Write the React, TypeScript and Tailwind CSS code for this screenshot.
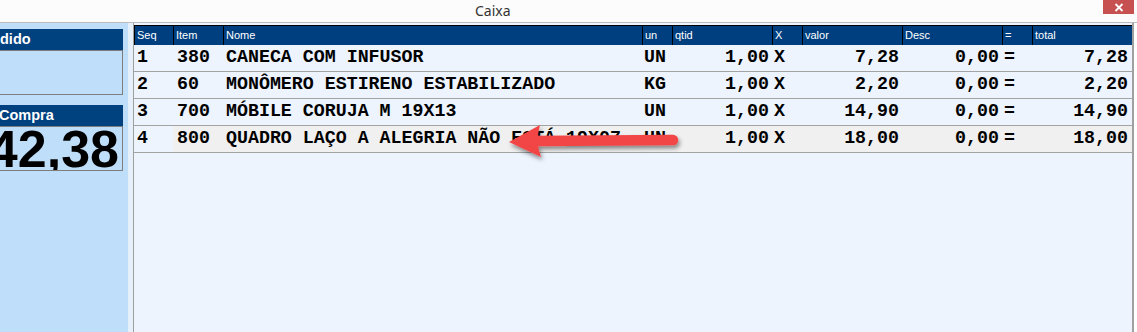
import React from "react";

type Col = { key: string; label: string; w: string; align: "left" | "right" };

const cols: Col[] = [
  { key: "seq", label: "Seq", w: "w-[39px]", align: "left" },
  { key: "item", label: "Item", w: "w-[50px]", align: "left" },
  { key: "nome", label: "Nome", w: "w-[419px]", align: "left" },
  { key: "un", label: "un", w: "w-[30px]", align: "left" },
  { key: "qtid", label: "qtid", w: "w-[100px]", align: "right" },
  { key: "x", label: "X", w: "w-[30px]", align: "left" },
  { key: "valor", label: "valor", w: "w-[100px]", align: "right" },
  { key: "desc", label: "Desc", w: "w-[100px]", align: "right" },
  { key: "eq", label: "=", w: "w-[30px]", align: "left" },
  { key: "total", label: "total", w: "w-[100px]", align: "right" },
];

const rows: Record<string, string>[] = [
  { seq: "1", item: "380", nome: "CANECA COM INFUSOR", un: "UN", qtid: "1,00", x: "X", valor: "7,28", desc: "0,00", eq: "=", total: "7,28" },
  { seq: "2", item: "60", nome: "MONÔMERO ESTIRENO ESTABILIZADO", un: "KG", qtid: "1,00", x: "X", valor: "2,20", desc: "0,00", eq: "=", total: "2,20" },
  { seq: "3", item: "700", nome: "MÓBILE CORUJA M 19X13", un: "UN", qtid: "1,00", x: "X", valor: "14,90", desc: "0,00", eq: "=", total: "14,90" },
  { seq: "4", item: "800", nome: "QUADRO LAÇO A ALEGRIA NÃO ESTÁ 19X07", un: "UN", qtid: "1,00", x: "X", valor: "18,00", desc: "0,00", eq: "=", total: "18,00" },
];

export default function App() {
  return (
    <div className="relative w-[1137px] h-[332px] overflow-hidden bg-white font-['Liberation_Sans',Arial,sans-serif]">
      {/* Title bar */}
      <div className="flex h-[23px] items-start border-b border-[#bcbcbc] bg-[#fcfcfc]">
        <div className="ml-[475px] mt-[1px] text-[14px] leading-[20px] text-[#333333] font-['Noto_Sans',sans-serif]">
          Caixa
        </div>
        <div className="ml-auto mr-[3px] flex h-[14px] w-[31px] items-center justify-center bg-[#c75050]">
          <svg width="10" height="9" viewBox="0 0 10 9">
            <path d="M1.5 1 L8.5 8 M8.5 1 L1.5 8" stroke="white" strokeWidth="1.8" />
          </svg>
        </div>
      </div>

      {/* Body */}
      <div className="flex h-[309px]">
        {/* Left panel */}
        <div className="w-[128px] overflow-hidden bg-[#bfdefa] pt-[6px]">
          <div className="ml-[-2px] w-[125px]">
            <div className="flex h-[21px] items-center bg-[#00417f] pl-[2px] text-[14.5px] font-bold text-white">
              dido
            </div>
            <div className="h-[45px] border border-[#7d7d7d] bg-[#bfdefa]" />
          </div>
          <div className="ml-[-2px] mt-[10px] w-[125px]">
            <div className="flex h-[21px] items-center bg-[#00417f] pl-[1px] text-[14.5px] font-bold text-white">
              Compra
            </div>
            <div className="h-[45px] overflow-hidden border border-[#7d7d7d] bg-[#bfdefa] pt-[2px]">
              <div className="flex h-[40px] justify-end pr-[3px] text-[52px] font-bold leading-[40px] text-black whitespace-nowrap">
                42,38
              </div>
            </div>
          </div>
        </div>

        {/* Spacer strip */}
        <div className="w-[5px] bg-[#e6f0fb]" />

        {/* Table area */}
        <div className="w-[1001px] border-l border-r-2 border-[#a0a0a0] bg-[#edf4fe] pt-[2px]">
          {/* Header */}
          <div className="flex h-[20px] border-t border-black bg-[#003f7f]">
            {cols.map((c) => (
              <div
                key={c.key}
                className={`${c.w} flex items-center border-l border-black pl-[2px] text-[11px] leading-none text-white`}
              >
                {c.label}
              </div>
            ))}
          </div>
          {/* Rows */}
          {rows.map((r, i) => (
            <div key={i} className="flex h-[27px] border-b border-[#a3a3a3]">
              {cols.map((c) => (
                <div
                  key={c.key}
                  className={`${c.w} flex items-center px-[3px] whitespace-nowrap overflow-hidden font-['Liberation_Mono',monospace] text-[18.3px] font-bold text-black ${
                    c.align === "right" ? "justify-end" : "justify-start"
                  } ${i === 3 && c.key !== "seq" ? "bg-[#f0f0f0]" : ""} ${c.key === "item" ? "pl-[4px]" : ""} ${
                    c.key === "un" || c.key === "x" || c.key === "eq" ? "pl-[2px]" : ""
                  } ${c.key === "total" ? "pr-[4px]" : ""}`}
                >
                  {r[c.key]}
                </div>
              ))}
            </div>
          ))}
        </div>
        <div className="flex-1 bg-white" />
      </div>

      {/* Red annotation arrow */}
      <svg
        className="pointer-events-none absolute left-0 top-0"
        width="1137"
        height="332"
        viewBox="0 0 1137 332"
      >
        <defs>
          <filter id="sh" x="-20%" y="-50%" width="140%" height="200%">
            <feDropShadow dx="1.5" dy="3" stdDeviation="2.2" floodColor="#000" floodOpacity="0.45" />
          </filter>
        </defs>
        <g filter="url(#sh)">
          <line x1="536" y1="141" x2="673" y2="140" stroke="#f24545" strokeWidth="10.5" strokeLinecap="round" />
          <path d="M509 142 L540 125 Q535 141 541 157 Z" fill="#f24545" />
        </g>
      </svg>
    </div>
  );
}
